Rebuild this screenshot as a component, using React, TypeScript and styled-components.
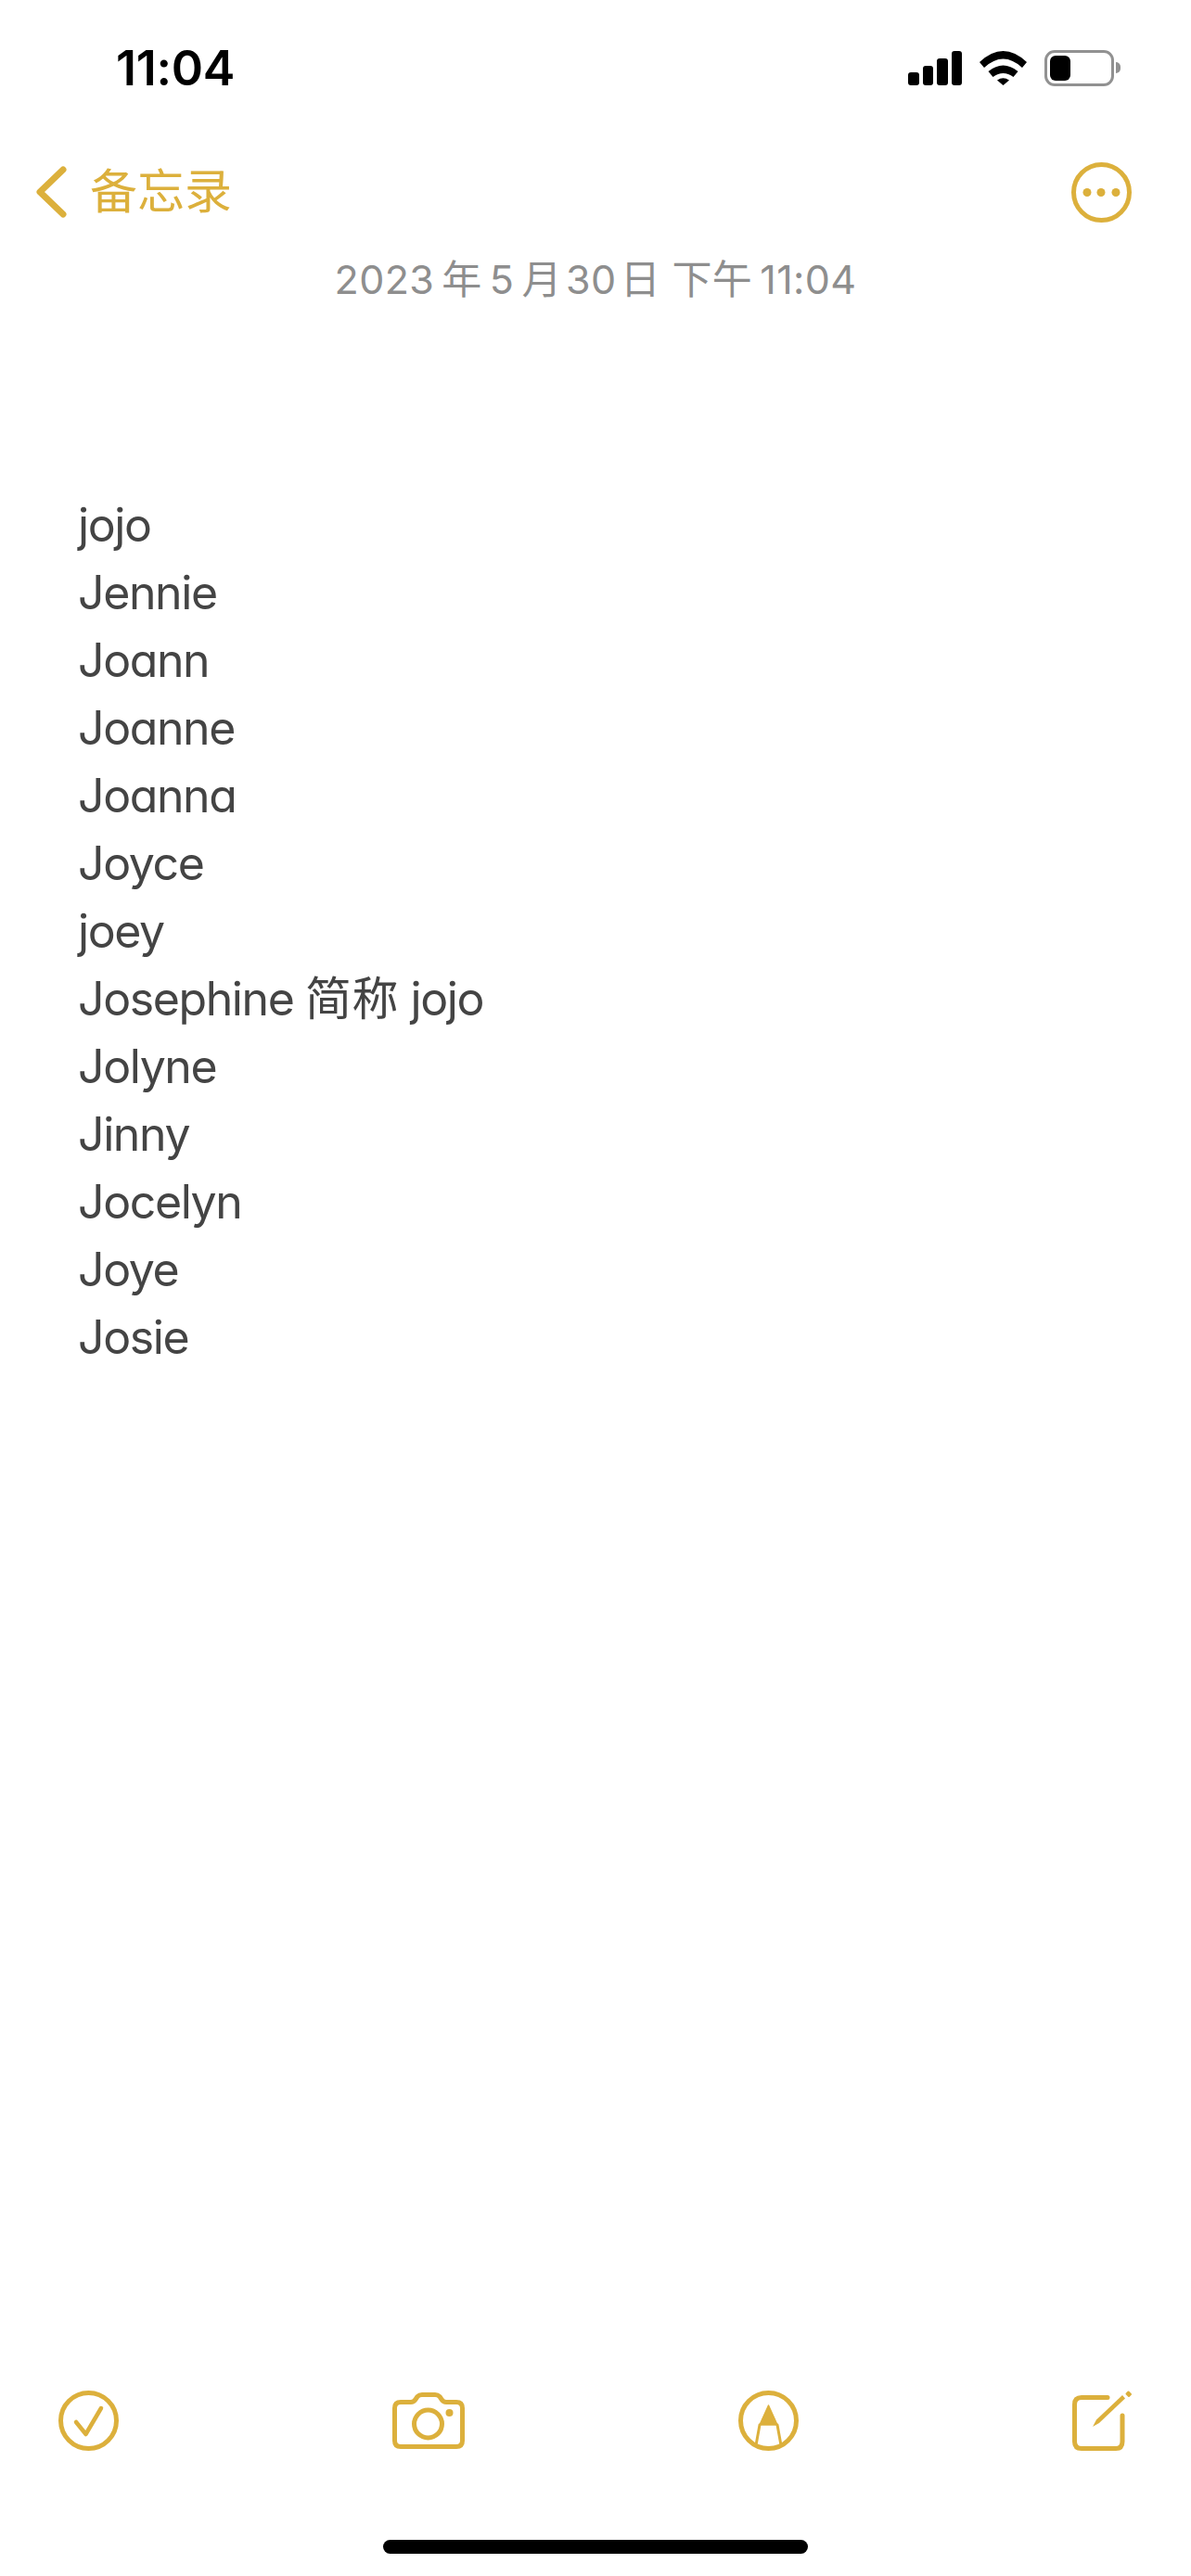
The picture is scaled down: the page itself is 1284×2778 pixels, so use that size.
import React from 'react'
import styled, { createGlobalStyle } from 'styled-components'

const GOLD = '#dcb03c'

const names: React.ReactNode[] = [
  'jojo',
  'Jennie',
  'Joann',
  'Joanne',
  'Joanna',
  'Joyce',
  'joey',
  'Josephine 简称 jojo',
  'Jolyne',
  'Jinny',
  'Jocelyn',
  'Joye',
  'Josie',
]

const GlobalStyle = createGlobalStyle`
  html, body {
    margin: 0;
    padding: 0;
    background: #fff;
  }
`

const Page = styled.div`
  width: 1284px;
  height: 2778px;
  display: flex;
  flex-direction: column;
  overflow: hidden;
  background: #fff;
  font-family: Inter, "Noto Sans CJK SC", sans-serif;
`

const StatusBar = styled.div`
  height: 146px;
  display: flex;
  align-items: center;
  justify-content: space-between;
  padding: 0 76px 0 125px;
  box-sizing: border-box;
`

const Clock = styled.span`
  font-size: 52px;
  font-weight: 600;
  letter-spacing: -0.3px;
  color: #000;
`

const StatusIcons = styled.div`
  display: flex;
  align-items: center;
  gap: 19px;
`

const SignalBars = styled.div`
  display: flex;
  align-items: flex-end;
  gap: 4px;
  height: 37px;
`

const SignalBar = styled.div<{ $h: number }>`
  width: 11.5px;
  height: ${(p) => p.$h}px;
  border-radius: 3px;
  background: #000;
`

const Battery = styled.div`
  display: flex;
  align-items: center;
  gap: 2px;
`

const BatteryShell = styled.div`
  width: 75px;
  height: 39px;
  box-sizing: border-box;
  border: 3px solid #919191;
  border-radius: 11px;
  padding: 3px;
`

const BatteryLevel = styled.div`
  width: 22px;
  height: 100%;
  border-radius: 6px;
  background: #000;
`

const BatteryNub = styled.div`
  width: 5px;
  height: 12px;
  border-radius: 0 6px 6px 0;
  background: #919191;
`

const NavBar = styled.div`
  height: 122px;
  display: flex;
  align-items: center;
  justify-content: space-between;
  padding: 0 64px 0 39px;
`

const BackLink = styled.div`
  display: flex;
  align-items: center;
  gap: 25px;
  color: ${GOLD};
  font-size: 51px;
  line-height: 60px;
`

const GoldIcon = styled.svg`
  display: block;
  flex: none;
  fill: none;
  stroke: ${GOLD};
  stroke-linecap: round;
  stroke-linejoin: round;
`

const DateLine = styled.div`
  height: 64px;
  line-height: 66px;
  text-align: center;
  font-size: 43px;
  letter-spacing: 0.35px;
  color: #8e8e8e;
  white-space: pre;
`

const NoteBody = styled.div`
  margin-top: 198px;
  padding-left: 84px;
  font-size: 50px;
  line-height: 73px;
  letter-spacing: -1.4px;
  color: #444;
  font-feature-settings: 'cv11';
`

const NoteLine = styled.div`
  white-space: pre;
`

const Toolbar = styled.div`
  margin-top: auto;
  height: 67px;
  display: flex;
  align-items: center;
  justify-content: space-between;
  padding: 0 62px 0 63px;
`

const HomeIndicator = styled.div`
  width: 458px;
  height: 15px;
  margin: 95px auto 24px;
  border-radius: 8px;
  background: #000;
`

const Cjk = styled.span`
  letter-spacing: 0.4px;
`

const App = () => (
  <Page>
    <GlobalStyle />
    <StatusBar>
      <Clock>11:04</Clock>
      <StatusIcons>
        <SignalBars>
          <SignalBar $h={14} />
          <SignalBar $h={21} />
          <SignalBar $h={29} />
          <SignalBar $h={37} />
        </SignalBars>
        <svg width="51" height="37" viewBox="0 0 51 37" fill="#000">
          <path d="M0 12Q25.5-12 51 12L46 18Q25.5-1 5 18Z" />
          <path d="M9.5 22Q25.5 9 41.5 22L36.5 28Q25.5 20 14.5 28Z" />
          <path d="M19 31.5Q25.5 27 32 31.5L25.5 37Z" />
        </svg>
        <Battery>
          <BatteryShell>
            <BatteryLevel />
          </BatteryShell>
          <BatteryNub />
        </Battery>
      </StatusIcons>
    </StatusBar>

    <NavBar>
      <BackLink>
        <GoldIcon width="33" height="56" viewBox="0 0 33 56" strokeWidth="7">
          <path d="M29 4L4 28L29 52" />
        </GoldIcon>
        备忘录
      </BackLink>
      <GoldIcon width="65" height="65" viewBox="0 0 65 65" strokeWidth="5">
        <circle cx="32.5" cy="32.5" r="30" />
        <circle cx="17" cy="32.5" r="4.5" fill={GOLD} stroke="none" />
        <circle cx="32" cy="32.5" r="4.5" fill={GOLD} stroke="none" />
        <circle cx="48" cy="32.5" r="4.5" fill={GOLD} stroke="none" />
      </GoldIcon>
    </NavBar>

    <DateLine>{'2023\u2009年\u20095\u2009月\u200a30\u200a日 下午\u200911:04'}</DateLine>

    <NoteBody>
      {names.map((name) =>
        name === 'Josephine 简称 jojo' ? (
          <NoteLine key="josephine">
            Josephine <Cjk>简称</Cjk> jojo
          </NoteLine>
        ) : (
          <NoteLine key={String(name)}>{name}</NoteLine>
        ),
      )}
    </NoteBody>

    <Toolbar>
      <GoldIcon width="65" height="65" viewBox="0 0 65 65" strokeWidth="5">
        <circle cx="32.5" cy="32.5" r="30" />
        <path d="M19 34L29.5 47L46 19" strokeWidth="4.5" />
      </GoldIcon>
      <GoldIcon width="78" height="61" viewBox="0 0 78 61" strokeWidth="5">
        <path d="M9 10.5H20Q23 10.5 25 7.5L27 4.5Q29 2.5 32 2.5H46Q49 2.5 51 4.5L53 7.5Q55 10.5 58 10.5H69Q75.5 10.5 75.5 17V52Q75.5 58.5 69 58.5H9Q2.5 58.5 2.5 52V17Q2.5 10.5 9 10.5Z" />
        <circle cx="38.5" cy="34" r="15" />
        <circle cx="61.5" cy="22" r="4" fill={GOLD} stroke="none" />
      </GoldIcon>
      <GoldIcon width="65" height="65" viewBox="0 0 65 65" strokeWidth="5">
        <circle cx="32.5" cy="32.5" r="30" />
        <path d="M32.5 16L23 37H42Z" fill={GOLD} strokeWidth="1.5" />
        <path d="M23 37L19 59M42 37L46 59" strokeWidth="3" />
      </GoldIcon>
      <GoldIcon width="66" height="67" viewBox="0 0 66 67" strokeWidth="5">
        <path d="M38 8.5H10Q2.5 8.5 2.5 16V56Q2.5 63.5 10 63.5H47Q54 63.5 54 56V28" />
        <path d="M22 40L26 32.5L54 6L57 9.5L29 36Z" fill={GOLD} stroke="none" />
        <path d="M58.5 4.5L60.5 2.5L63 5L61 7Z" fill={GOLD} strokeWidth="2" />
      </GoldIcon>
    </Toolbar>
    <HomeIndicator />
  </Page>
)

export default App
